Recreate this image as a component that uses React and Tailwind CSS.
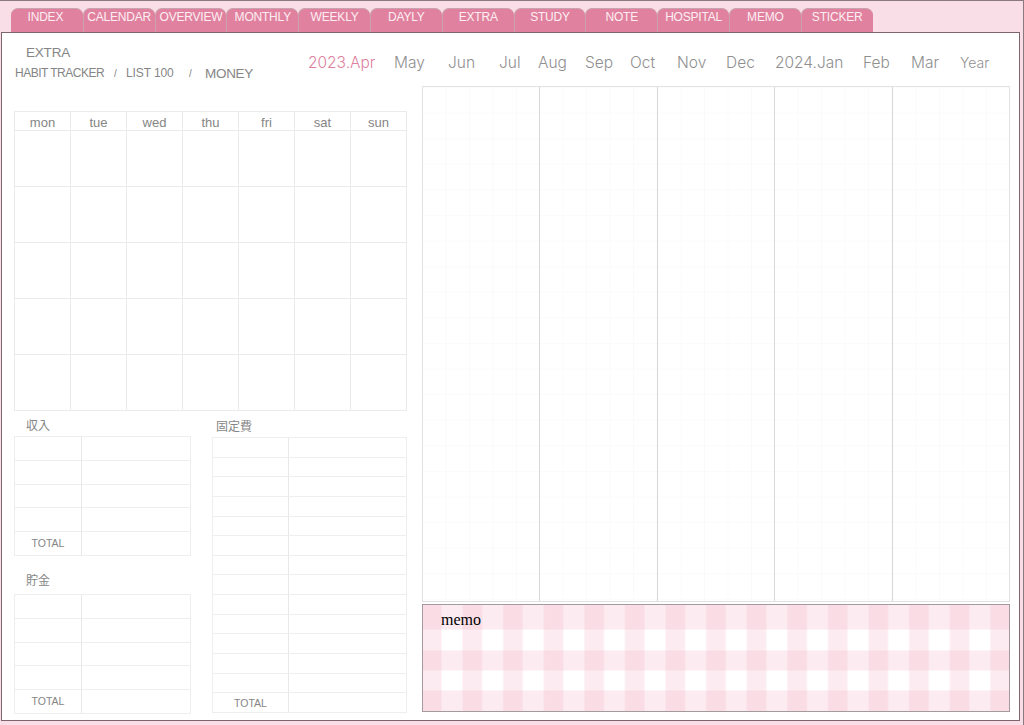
import React from "react";

const tabs = ["INDEX", "CALENDAR", "OVERVIEW", "MONTHLY", "WEEKLY", "DAYLY", "EXTRA", "STUDY", "NOTE", "HOSPITAL", "MEMO", "STICKER"];

const months = [
  { label: "2023.Apr", className: "w-[86px] text-[#dd7f9e]" },
  { label: "May", className: "w-[54px]" },
  { label: "Jun", className: "w-[51px]" },
  { label: "Jul", className: "w-[39px]" },
  { label: "Aug", className: "w-[47px]" },
  { label: "Sep", className: "w-[45px]" },
  { label: "Oct", className: "w-[47px]" },
  { label: "Nov", className: "w-[49px]" },
  { label: "Dec", className: "w-[49px]" },
  { label: "2024.Jan", className: "w-[88px]" },
  { label: "Feb", className: "w-[48px]" },
  { label: "Mar", className: "w-[49px]" },
  { label: "Year", className: "text-[14px]" },
];

const days = ["mon", "tue", "wed", "thu", "fri", "sat", "sun"];

const Calendar = () => (
  <div className="w-[393px] border-t border-l border-[#ebebeb]">
    <div className="grid grid-cols-7 auto-rows-[19px]">
      {days.map((d) => (
        <div key={d} className="h-[19px] overflow-hidden border-r border-b border-[#ebebeb] text-center text-[13px] leading-[21px] text-[#858585]">
          {d}
        </div>
      ))}
    </div>
    <div className="grid grid-cols-7 auto-rows-[56px]">
      {Array.from({ length: 35 }).map((_, i) => (
        <div key={i} className="border-r border-b border-[#ebebeb]" />
      ))}
    </div>
  </div>
);

const MoneyTable = ({ rows, rowClass, firstClass, totalClass }) => (
  <div className="border-t border-l border-[#eeeeee]">
    {Array.from({ length: rows }).map((_, i) => (
      <div key={i} className={`flex border-b border-r border-[#eeeeee] ${rowClass}`}>
        <div className={`border-r border-[#e8e8e8] text-center text-[10.5px] text-[#858585] ${firstClass} ${totalClass}`}>
          {i === rows - 1 ? "TOTAL" : ""}
        </div>
      </div>
    ))}
  </div>
);

const Column = () => (
  <div className="flex-1 border-r border-[#d8d8d8] last:border-r-0 bg-[linear-gradient(to_right,#fafafa_1px,transparent_1px),linear-gradient(to_bottom,#fbfbfb_1px,transparent_1px)] bg-[size:23.5px_25.6px] bg-[position:-1px_0px]" />
);

const App = () => {
  return (
    <div className="w-[1024px] h-[725px] flex flex-col bg-[#f9dde7] border-t border-r border-[#8a7a80] font-['Liberation_Sans',sans-serif] overflow-hidden">
      <div className="flex pt-[7px] pl-[11px] h-[31px] shrink-0">
        {tabs.map((t) => (
          <div
            key={t}
            className="w-[71.8px] shrink-0 rounded-t-[7px] bg-[#e0829f] border-l border-t border-[#c9a3af] first:border-l-0 first:pr-[3px] text-center text-[12px] tracking-[-0.2px] leading-[17px] text-[#fdeef3] whitespace-nowrap"
          >
            {t}
          </div>
        ))}
      </div>

      <div className="w-[1019px] h-[689px] ml-[1px] shrink-0 bg-white border border-[#7d6570]">
        <div className="flex h-[53px]">
          <div className="w-[293px] shrink-0 pl-[13px] text-[#858585]">
            <div className="pl-[11px] pt-[12px] text-[13.5px] leading-[16px] tracking-[-0.2px]">EXTRA</div>
            <div className="flex items-center pt-[4px] text-[12px] leading-[17px] whitespace-nowrap">
              <span className="w-[99px] tracking-[-0.5px]">HABIT TRACKER</span>
              <span className="w-[12px] text-[10px]">/</span>
              <span className="w-[63px] tracking-[-0.1px]">LIST 100</span>
              <span className="w-[16px] text-[10px]">/</span>
              <span className="text-[13.5px] tracking-[-0.3px]">MONEY</span>
            </div>
          </div>
          <div className="flex pl-[13px] pt-[19px] font-['Inter',sans-serif] font-light text-[15.5px] leading-[22px] text-[#8f8f8f] whitespace-nowrap">
            {months.map((m) => (
              <span key={m.label} className={m.className}>{m.label}</span>
            ))}
          </div>
        </div>

        <div className="flex">
          <div className="w-[406px] shrink-0 pl-[12px] pt-[25px]">
            <Calendar />
            <div className="flex mt-[6px]">
              <div className="w-[177px] shrink-0">
                <div className="pl-[12px] h-[19px] text-[12px] leading-[16px] text-[#858585] font-['Noto_Sans_CJK_JP',sans-serif]">収入</div>
                <MoneyTable rows={5} rowClass="h-[23.8px]" firstClass="w-[67px]" totalClass="leading-[23px]" />
                <div className="pl-[12px] pt-[16px] h-[38px] text-[12px] leading-[16px] text-[#858585] font-['Noto_Sans_CJK_JP',sans-serif]">貯金</div>
                <MoneyTable rows={5} rowClass="h-[23.8px]" firstClass="w-[67px]" totalClass="leading-[23px]" />
              </div>
              <div className="w-[195px] ml-[21px] shrink-0">
                <div className="pl-[4px] h-[20px] pt-[1px] text-[12px] leading-[16px] text-[#858585] font-['Noto_Sans_CJK_JP',sans-serif]">固定費</div>
                <MoneyTable rows={14} rowClass="h-[19.65px]" firstClass="w-[76px]" totalClass="leading-[20px]" />
              </div>
            </div>
          </div>

          <div className="w-[588px] ml-[14px] shrink-0">
            <div className="flex h-[516px] border border-[#e2e2e2]">
              <Column />
              <Column />
              <Column />
              <Column />
              <Column />
            </div>
            <div className="h-[108px] mt-[2px] pl-[18px] pt-[5px] border border-[#a39a9d] font-['Liberation_Serif',serif] text-[16px] leading-[20px] text-black bg-[repeating-linear-gradient(90deg,#f3b0c440_0_17.5px,transparent_19.5px_38.5px,#f3b0c440_40.6px),linear-gradient(180deg,#f3b0c440_0_23.5px,transparent_25.5px_44.5px,#f3b0c440_46.5px_64.5px,transparent_66.5px_84.5px,#f3b0c440_86.5px)]">
              memo
            </div>
          </div>
        </div>
      </div>
    </div>
  );
};

export default App;
